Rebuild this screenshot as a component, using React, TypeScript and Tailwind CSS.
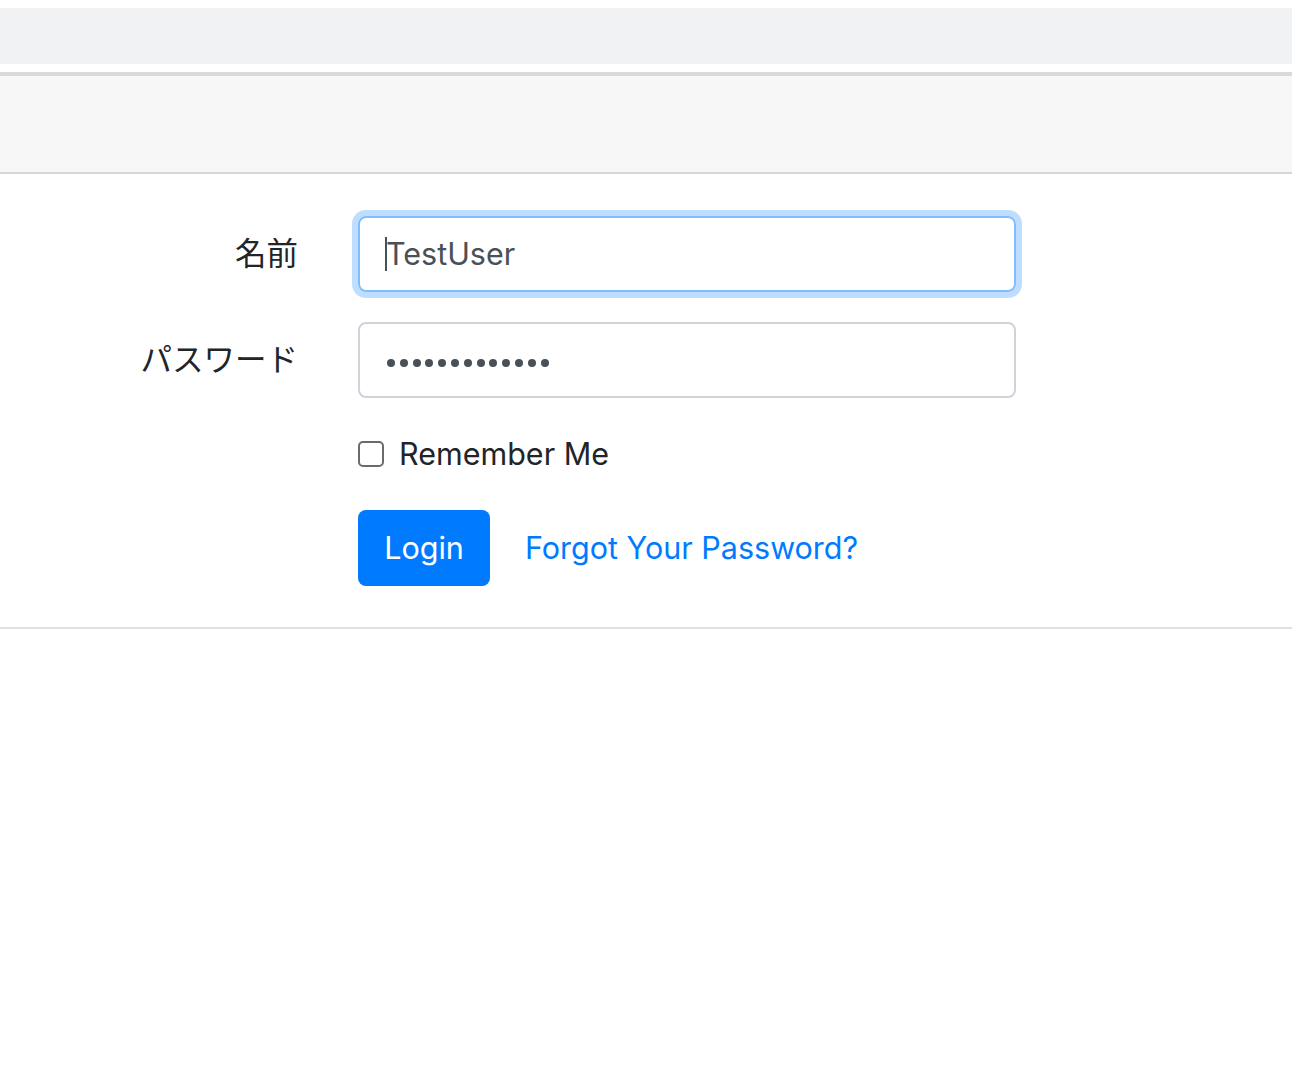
import React from "react";

const font = { fontFamily: 'Inter, "Noto Sans CJK JP", sans-serif' };

const App: React.FC = () => {
  const dots = Array.from({ length: 13 });

  return (
    <div className="min-h-[1082px] bg-white pt-[8px] text-[#212529]" style={font}>
      <div className="h-[56px] bg-[#f1f2f4]" />
      <div className="h-[8px]" />
      <div className="border-t-4 border-b-2 border-[#dadade] border-b-[#dfdfdf]">
        <div className="h-[98px] bg-[#f7f7f7] border-b-2 border-[#d6d6d6]" />
        <div className="pt-[42px] pb-[41px]">
          <div className="flex items-center mb-[30px]">
            <label className="w-[298px] text-right text-[31.5px] leading-[76px]">名前</label>
            <div className="ml-[60px] w-[658px] h-[76px] rounded-[8px] border-2 border-[#80bdff] shadow-[0_0_0_6px_rgba(0,123,255,0.25)] flex items-center pl-[25px] text-[30.5px] text-[#495057]">
              <span className="inline-block w-[2px] h-[34px] bg-[#495057] mr-[-1px]" />
              TestUser
            </div>
          </div>
          <div className="flex items-center mb-[30px]">
            <label className="w-[298px] text-right text-[31.5px] leading-[76px]">パスワード</label>
            <div className="ml-[60px] w-[658px] h-[76px] rounded-[8px] border-2 border-[#ced4da] flex items-center pl-[27px] pt-[5px] gap-[4.8px]">
              {dots.map((_, i) => (
                <span key={i} className="block w-[8px] h-[8px] rounded-full bg-[#495057]" />
              ))}
            </div>
          </div>
          <div className="flex items-center ml-[358px] h-[52px] mb-[30px]">
            <span className="block w-[26px] h-[26px] rounded-[5px] border-2 border-[#6b6b6b] bg-white" />
            <span className="ml-[15px] text-[30.5px]">Remember Me</span>
          </div>
          <div className="flex items-center ml-[358px]">
            <button className="h-[76px] w-[132px] rounded-[8px] bg-[#007bff] text-white text-[30.5px]">
              Login
            </button>
            <a className="ml-[35px] text-[30.5px] text-[#007bff]" href="#">
              Forgot Your Password?
            </a>
          </div>
        </div>
      </div>
    </div>
  );
};

export default App;
